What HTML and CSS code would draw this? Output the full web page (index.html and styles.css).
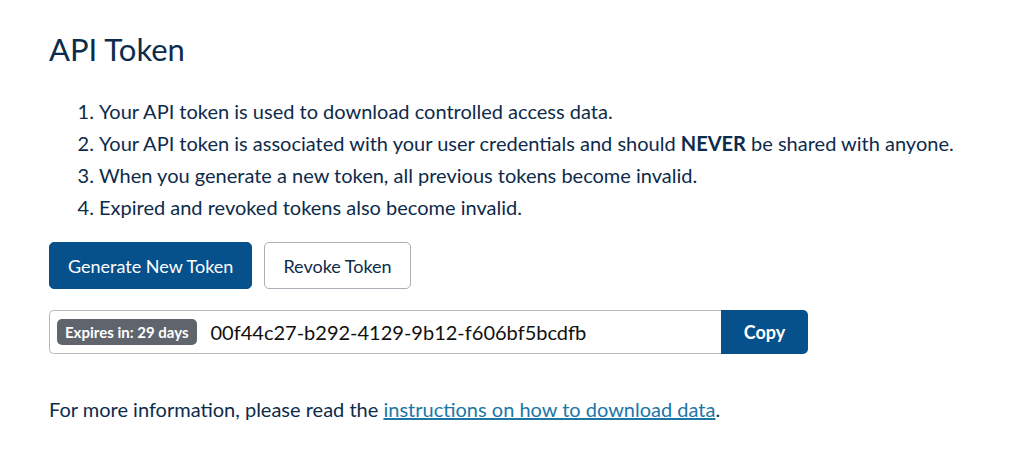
FILE: index.html
```html
<!DOCTYPE html>
<html lang="en">
<head>
    <meta charset="UTF-8">
    <meta name="viewport" content="width=device-width, initial-scale=1.0">
    <title>API Token</title>
    <link rel="stylesheet" href="styles.css">
</head>
<body>
    <div class="container">
        <h1>API Token</h1>
        <ol class="token-notes">
            <li>Your API token is used to download controlled access data.</li>
            <li>Your API token is associated with your user credentials and should <strong>NEVER</strong> be shared with anyone.</li>
            <li>When you generate a new token, all previous tokens become invalid.</li>
            <li>Expired and revoked tokens also become invalid.</li>
        </ol>
        <div class="actions">
            <button class="btn btn-primary">Generate New Token</button>
            <button class="btn btn-outline">Revoke Token</button>
        </div>
        <div class="token-group">
            <div class="token-field">
                <span class="badge">Expires in: 29 days</span>
                <span class="token-value">00f44c27-b292-4129-9b12-f606bf5bcdfb</span>
            </div>
            <button class="btn-copy">Copy</button>
        </div>
        <p class="more-info">For more information, please read the <a href="#">instructions on how to download data</a>.</p>
    </div>
</body>
</html>
```

FILE: styles.css
```css
body {
    font-family: Lato, "Open Sans", sans-serif;
    margin: 0;
    padding: 0;
    background-color: #fff;
    color: #0d2b4b;
}
.container {
    padding: 29px 49px;
}
h1 {
    font-size: 31px;
    font-weight: 400;
    margin: 0 0 26px;
    line-height: 40px;
}
.token-notes {
    font-size: 20px;
    line-height: 32px;
    margin: 0 0 19px;
    padding-left: 50px;
}
.token-notes strong {
    font-weight: 700;
}
.actions {
    display: flex;
    gap: 12px;
    margin-bottom: 21px;
}
.btn {
    font-family: inherit;
    font-size: 18px;
    height: 47px;
    padding: 0 18px;
    border-radius: 5px;
    cursor: pointer;
}
.btn-primary {
    background-color: #06508c;
    color: #fff;
    border: 1px solid #06508c;
}
.btn-outline {
    background-color: #fff;
    color: #0d2b4b;
    border: 1px solid #a9b0b8;
}
.token-group {
    display: flex;
    width: 759px;
    height: 44px;
}
.token-field {
    flex: 1;
    display: flex;
    align-items: center;
    gap: 14px;
    padding: 0 7px;
    border: 1px solid #b5b9bf;
    border-right: none;
    border-radius: 5px 0 0 5px;
}
.badge {
    background-color: #60656d;
    color: #fff;
    font-size: 15px;
    font-weight: 700;
    padding: 4px 8px;
    border-radius: 5px;
}
.token-value {
    font-size: 20px;
    color: #111;
}
.btn-copy {
    font-family: inherit;
    font-size: 18px;
    font-weight: 700;
    width: 87px;
    background-color: #06508c;
    color: #fff;
    border: none;
    border-radius: 0 5px 5px 0;
    cursor: pointer;
}
.more-info {
    font-size: 20px;
    margin: 43px 0 0;
}
.more-info a {
    color: #1c76a6;
}
```
